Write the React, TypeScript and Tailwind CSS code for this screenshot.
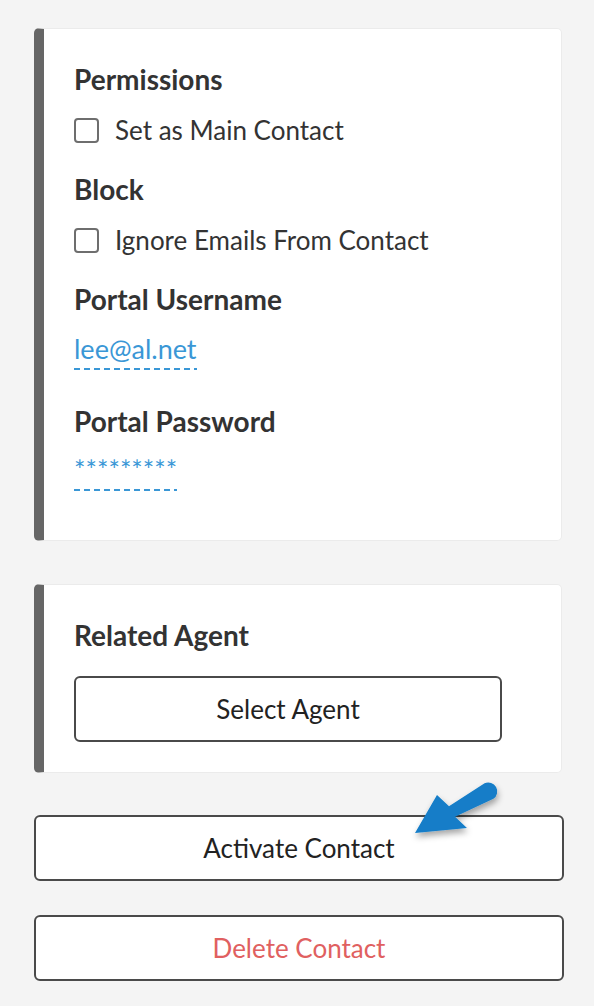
import React from "react";

function CheckRow({ label }: { label: string }) {
  return (
    <div className="mt-[19px] flex h-[32px] items-center">
      <span className="block h-[25px] w-[25px] shrink-0 rounded-[4px] border-2 border-[#6e6e6e] bg-white" />
      <span className="ml-[16px] text-[26px] leading-[32px] text-[#333]">{label}</span>
    </div>
  );
}

function Heading({ children, className = "" }: { children: React.ReactNode; className?: string }) {
  return <div className={`text-[28px] font-bold leading-[32px] text-[#333] ${className}`}>{children}</div>;
}

function DashedValue({ children, className = "" }: { children: React.ReactNode; className?: string }) {
  return (
    <div className={`flex ${className}`}>
      <div className="flex flex-col">
        <span className="text-[27px] leading-[32px] text-[#3a97d6]">{children}</span>
        <span className="mt-[3px] h-[2px] w-full bg-[repeating-linear-gradient(to_right,#3a97d6_0px,#3a97d6_6px,transparent_6px,transparent_10px)]" />
      </div>
    </div>
  );
}

export default function App() {
  return (
    <div className="relative min-h-[1006px] bg-[#f4f4f4] pl-[34px] pt-[28px] font-['Lato',sans-serif] text-[26px]">
      {/* Card 1 */}
      <div className="w-[528px] rounded-[5px] border border-l-[10px] border-[#ebebeb] border-l-[#666] bg-white pb-[49px] pl-[30px] pt-[34px]">
        <Heading>Permissions</Heading>
        <CheckRow label="Set as Main Contact" />
        <Heading className="mt-[27px]">Block</Heading>
        <CheckRow label="Ignore Emails From Contact" />
        <Heading className="mt-[27px]">Portal Username</Heading>
        <DashedValue className="mt-[18px]">lee@al.net</DashedValue>
        <Heading className="mt-[35px]">Portal Password</Heading>
        <DashedValue className="mt-[17px]">*********</DashedValue>
      </div>

      {/* Card 2 */}
      <div className="mt-[43px] w-[528px] rounded-[5px] border border-l-[10px] border-[#ebebeb] border-l-[#666] bg-white pb-[30px] pl-[30px] pt-[34px]">
        <Heading>Related Agent</Heading>
        <button className="mt-[25px] flex h-[66px] w-[428px] items-center justify-center rounded-[6px] border-2 border-[#4a4a4a] bg-white text-[26px] text-[#222]">
          Select Agent
        </button>
      </div>

      <button className="mt-[42px] flex h-[66px] w-[530px] items-center justify-center rounded-[6px] border-2 border-[#4a4a4a] bg-white text-[26px] text-[#222]">
        Activate Contact
      </button>
      <button className="mt-[34px] flex h-[66px] w-[530px] items-center justify-center rounded-[6px] border-2 border-[#4a4a4a] bg-white text-[26px] text-[#e06060]">
        Delete Contact
      </button>

      {/* Annotation arrow */}
      <svg
        className="absolute left-[405px] top-[775px] h-[70px] w-[100px] overflow-visible"
        viewBox="0 0 100 70"
      >
        <defs>
          <filter id="sh" x="-30%" y="-30%" width="160%" height="170%">
            <feDropShadow dx="1" dy="4" stdDeviation="3" floodColor="#000" floodOpacity="0.35" />
          </filter>
        </defs>
        <path
          d="M 10 58 L 32 20 L 44 31.3 L 79.6 8.2 A 9 9 0 0 1 88.4 23.8 L 50 41.7 L 62 53 Z"
          fill="#137dc8"
          filter="url(#sh)"
        />
      </svg>
    </div>
  );
}
